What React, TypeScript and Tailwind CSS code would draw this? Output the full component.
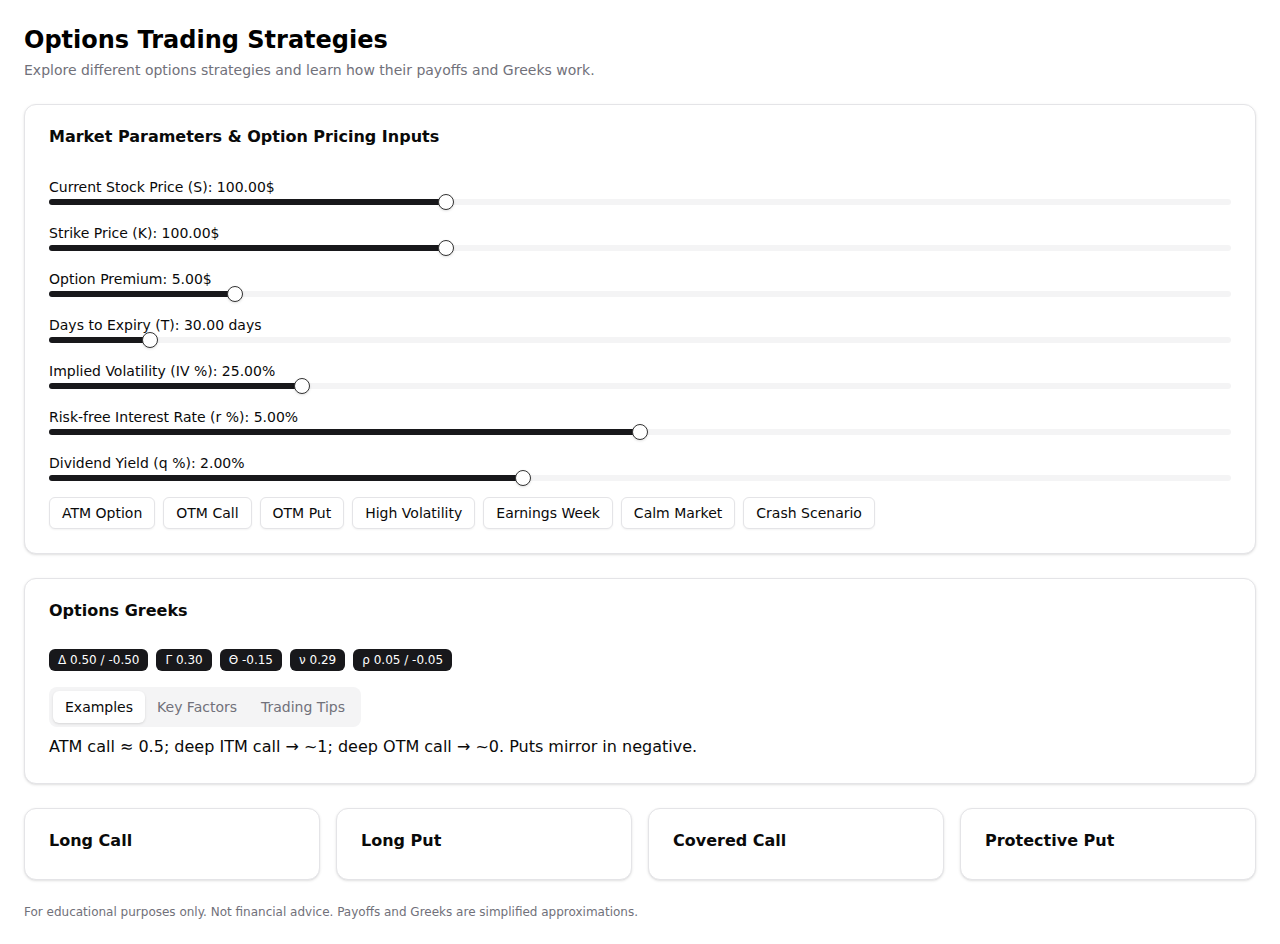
import { useState } from 'react';

type Param = {
  label: string;
  value: number;
  min: number;
  max: number;
  fmt: (v: number) => string;
};

const params: Param[] = [
  { label: 'Current Stock Price (S)', value: 100, min: 50, max: 200, fmt: (v) => `${v.toFixed(2)}$` },
  { label: 'Strike Price (K)', value: 100, min: 50, max: 200, fmt: (v) => `${v.toFixed(2)}$` },
  { label: 'Option Premium', value: 5, min: 0.5, max: 30, fmt: (v) => `${v.toFixed(2)}$` },
  { label: 'Days to Expiry (T)', value: 30, min: 1, max: 365, fmt: (v) => `${v.toFixed(2)} days` },
  { label: 'Implied Volatility (IV %)', value: 25, min: 5, max: 100, fmt: (v) => `${v.toFixed(2)}%` },
  { label: 'Risk-free Interest Rate (r %)', value: 5, min: 0, max: 10, fmt: (v) => `${v.toFixed(2)}%` },
  { label: 'Dividend Yield (q %)', value: 2, min: 0, max: 5, fmt: (v) => `${v.toFixed(2)}%` },
];

const presets = ['ATM Option', 'OTM Call', 'OTM Put', 'High Volatility', 'Earnings Week', 'Calm Market', 'Crash Scenario'];

const greeks = ['Δ 0.50 / -0.50', 'Γ 0.30', 'Θ -0.15', 'ν 0.29', 'ρ 0.05 / -0.05'];

const tabs: { key: string; label: string; text: string }[] = [
  { key: 'examples', label: 'Examples', text: 'ATM call ≈ 0.5; deep ITM call → ~1; deep OTM call → ~0. Puts mirror in negative.' },
  { key: 'factors', label: 'Key Factors', text: 'Delta moves with the stock price, volatility and time to expiry.' },
  { key: 'tips', label: 'Trading Tips', text: 'Use delta as a rough probability of finishing in the money.' },
];

const strategies = ['Long Call', 'Long Put', 'Covered Call', 'Protective Put'];

function Slider({ p }: { p: Param }) {
  const f = (p.value - p.min) / (p.max - p.min);
  return (
    <div>
      <div className="pb-0.5 text-sm leading-[14px] text-[#0a0a0a]">
        {p.label}: {p.fmt(p.value)}
      </div>
      <div className="relative h-3 flex items-center">
        <div className="relative h-1.5 w-full rounded-full bg-[#f4f4f5]">
          <div
            className="absolute left-0 top-0 h-full rounded-full bg-[#18181b]"
            style={{ width: `calc(${f} * (100% - 16px) + 8px)` }}
          />
          <div
            className="absolute top-1/2 h-4 w-4 -translate-y-1/2 rounded-full border border-[#333] bg-white shadow-sm"
            style={{ left: `calc(${f} * (100% - 16px))` }}
          />
        </div>
      </div>
    </div>
  );
}

export default function App() {
  const [tab, setTab] = useState('examples');
  const current = tabs.find((t) => t.key === tab)!;

  return (
    <div className="min-h-screen bg-white px-6 pt-[26px] pb-6 font-['DejaVu_Sans',sans-serif] text-[#0a0a0a]">
      <h1 className="text-2xl leading-[28px] font-bold text-black">Options Trading Strategies</h1>
      <p className="mt-[6px] text-sm leading-5 text-[#71717a]">
        Explore different options strategies and learn how their payoffs and Greeks work.
      </p>

      <div className="mt-6 rounded-xl border border-[#e4e4e7] bg-white p-6 shadow-sm">
        <h2 className="text-base leading-none font-bold">Market Parameters &amp; Option Pricing Inputs</h2>
        <div className="mt-[35px] flex flex-col gap-[18px]">
          {params.map((p) => (
            <Slider key={p.label} p={p} />
          ))}
        </div>
        <div className="mt-[13px] flex flex-wrap gap-2">
          {presets.map((b) => (
            <button
              key={b}
              className="h-8 rounded-md border border-[#e4e4e7] bg-white px-3 text-sm text-[#0a0a0a] shadow-xs"
            >
              {b}
            </button>
          ))}
        </div>
      </div>

      <div className="mt-6 rounded-xl border border-[#e4e4e7] bg-white p-6 shadow-sm">
        <h2 className="text-base leading-none font-bold">Options Greeks</h2>
        <div className="mt-[30px] flex flex-wrap gap-2">
          {greeks.map((g) => (
            <span
              key={g}
              className="rounded-md border border-transparent bg-[#18181b] px-2 py-0.5 text-xs leading-4 whitespace-nowrap text-white"
            >
              {g}
            </span>
          ))}
        </div>
        <div className="mt-4 inline-flex h-10 items-center rounded-lg bg-[#f4f4f5] p-1">
          {tabs.map((t) => (
            <button
              key={t.key}
              onClick={() => setTab(t.key)}
              className={
                t.key === tab
                  ? 'h-full rounded-md bg-white px-3 text-sm text-[#0a0a0a] shadow-sm'
                  : 'h-full rounded-md px-3 text-sm text-[#71717a]'
              }
            >
              {t.label}
            </button>
          ))}
        </div>
        <p className="mt-2 text-base leading-6">{current.text}</p>
      </div>

      <div className="mt-6 grid grid-cols-4 gap-4">
        {strategies.map((s) => (
          <div key={s} className="rounded-xl border border-[#e4e4e7] bg-white px-6 pt-6 pb-[30px] shadow-sm">
            <h3 className="text-base leading-none font-bold">{s}</h3>
          </div>
        ))}
      </div>

      <p className="mt-6 text-xs leading-4 text-[#71717a]">
        For educational purposes only. Not financial advice. Payoffs and Greeks are simplified approximations.
      </p>
    </div>
  );
}
